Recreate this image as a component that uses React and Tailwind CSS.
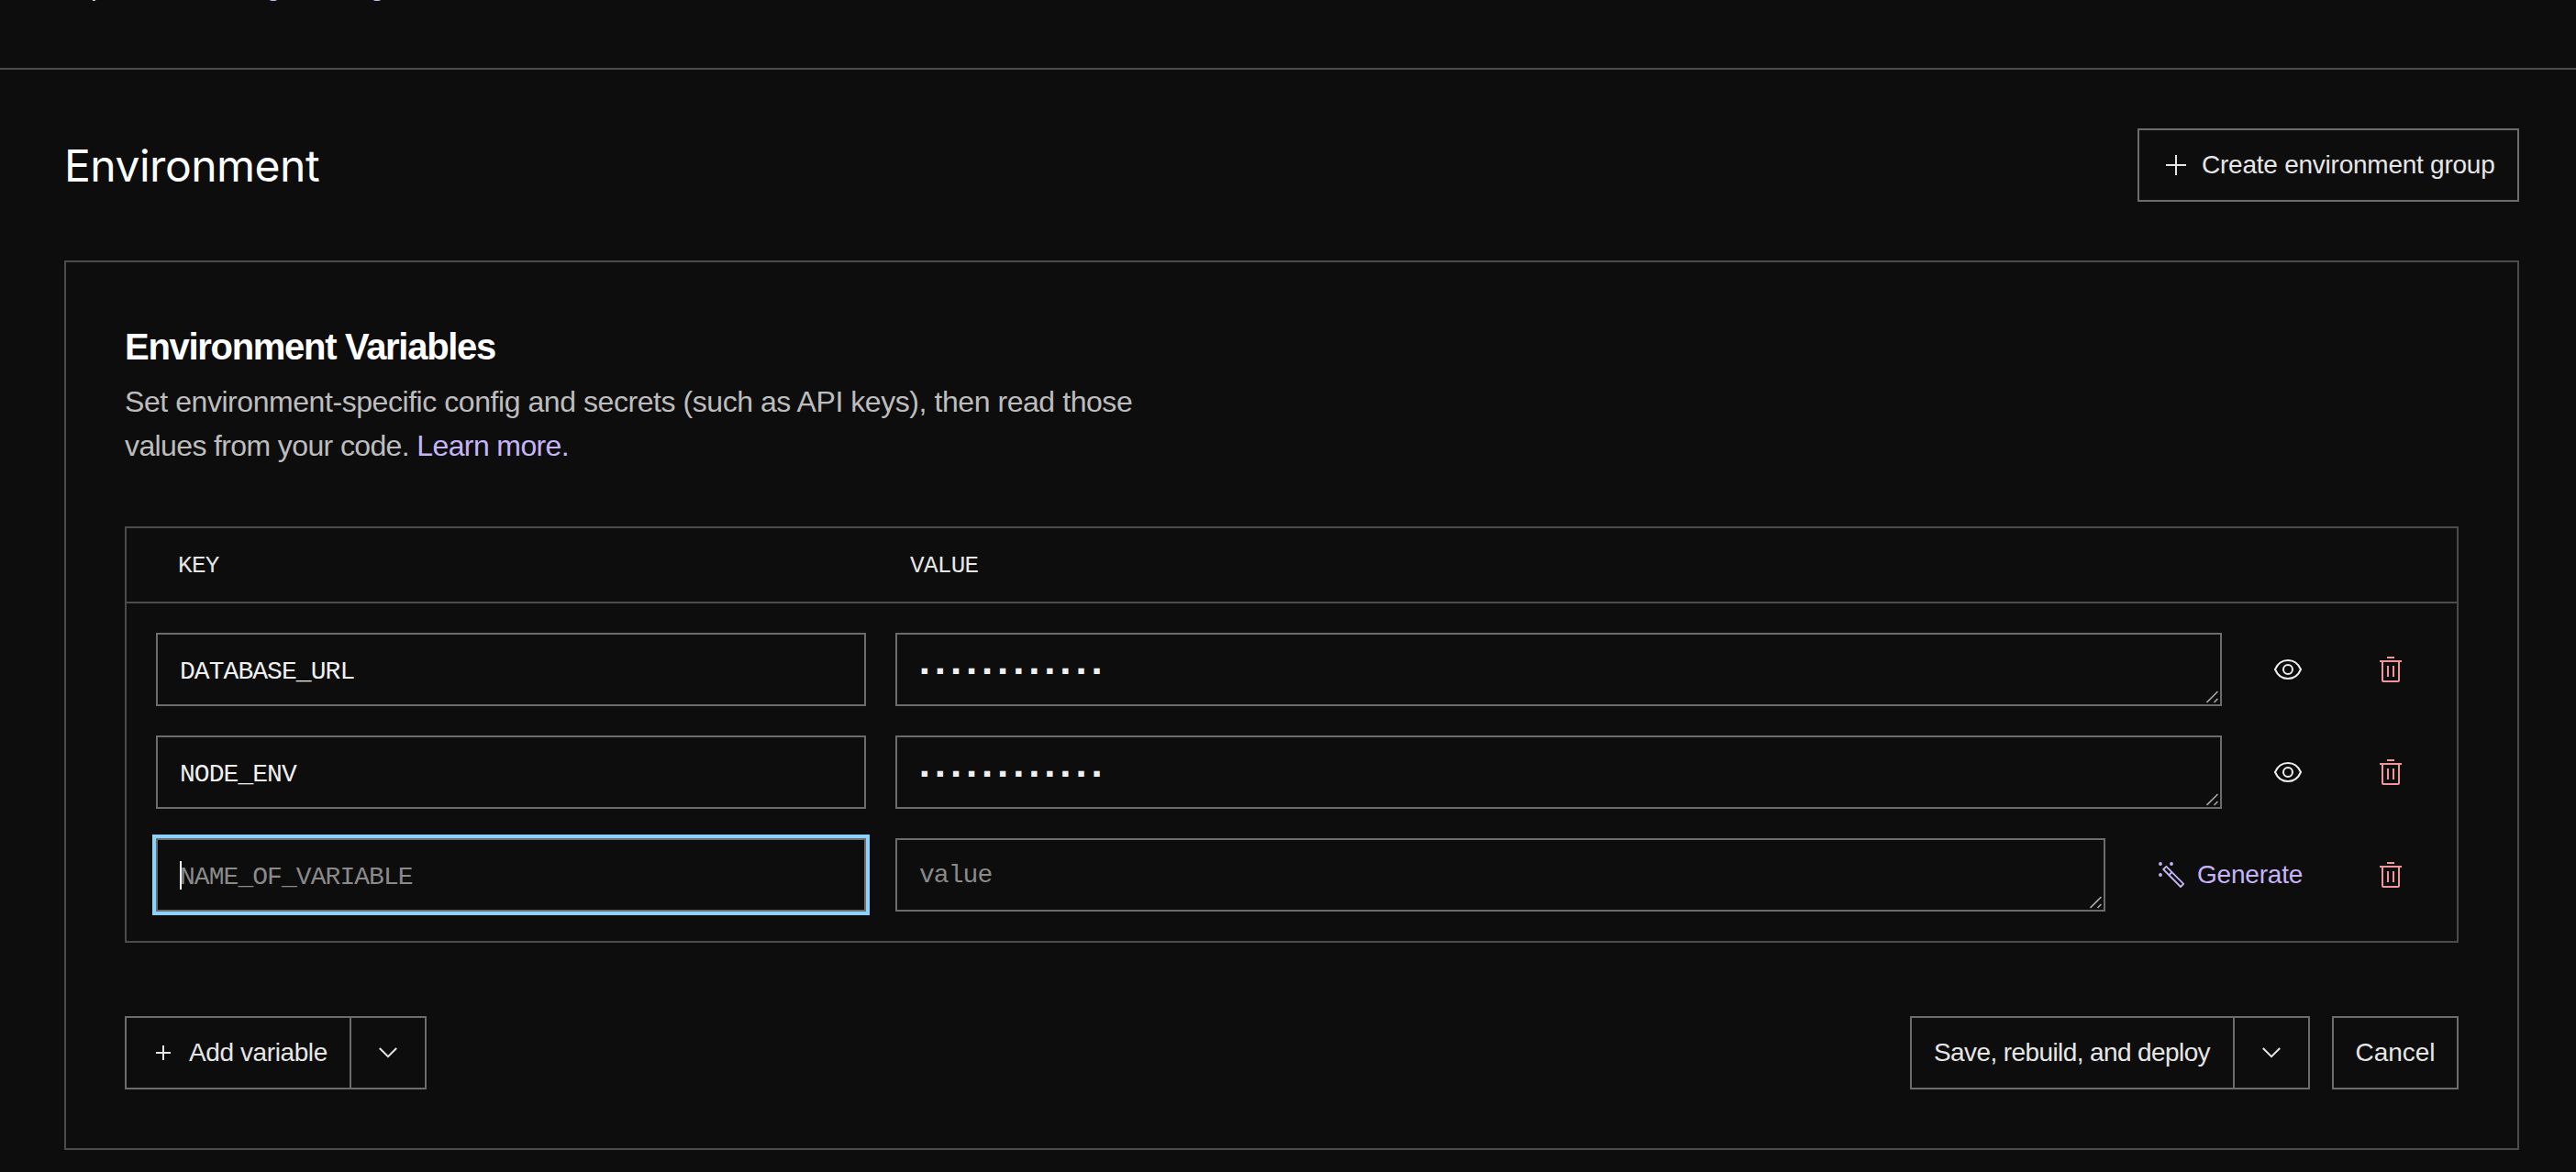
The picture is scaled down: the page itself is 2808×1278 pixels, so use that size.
import React, { useState } from 'react';

const initialVariables = [
  { id: 1, key: 'DATABASE_URL', saved: true },
  { id: 2, key: 'NODE_ENV', saved: true },
  { id: 3, key: '', saved: false },
];

function PlusIcon({ className }) {
  return (
    <svg viewBox="0 0 22 22" className={className} fill="none" stroke="currentColor">
      <path d="M11 0V22M0 11H22" strokeWidth="2" vectorEffect="non-scaling-stroke" />
    </svg>
  );
}

function ChevronIcon() {
  return (
    <svg viewBox="0 0 20 12" className="w-5 h-3" fill="none" stroke="currentColor" strokeWidth="2">
      <path d="M0.8 1L10 10.2L19.2 1" />
    </svg>
  );
}

function EyeIcon() {
  return (
    <svg viewBox="0 0 32 24" className="w-8 h-6" fill="none" stroke="currentColor" strokeWidth="2">
      <path d="M2 12C4.8 5.5 10 2 16 2S27.2 5.5 30 12C27.2 18.5 22 22 16 22S4.8 18.5 2 12Z" />
      <circle cx="16" cy="12" r="5" />
    </svg>
  );
}

function TrashIcon() {
  return (
    <svg viewBox="0 0 24 28" className="w-6 h-7" fill="none" stroke="currentColor" strokeWidth="2">
      <path d="M8 1H16M0 5H24M9 10V22M15 10V22" />
      <path d="M3 5V26Q3 27 4 27H20Q21 27 21 26V5" />
    </svg>
  );
}

function WandIcon() {
  return (
    <svg viewBox="0 0 28 28" className="w-7 h-7" fill="none" stroke="currentColor" strokeWidth="1.8">
      <path d="M5.2 8L8.4 4.8L27.2 23.8L24 27Z" strokeLinejoin="round" />
      <path d="M11.2 14.4L14.6 11" />
      <g fill="currentColor" stroke="none">
        <circle cx="2" cy="2" r="1.9" />
        <circle cx="14" cy="2" r="1.9" />
        <circle cx="2" cy="14" r="1.9" />
      </g>
    </svg>
  );
}

function ResizeHandle() {
  return (
    <svg
      viewBox="0 0 14 14"
      className="absolute right-[1px] bottom-[1px] w-3.5 h-3.5 text-[#a8a8a8]"
      fill="none"
      stroke="currentColor"
      strokeWidth="1.6"
    >
      <path d="M0.5 13L12.5 1M8.5 13L12.5 9" />
    </svg>
  );
}

function VariableRow({ variable, onChange, onDelete }) {
  return (
    <div className="flex gap-8">
      <div className={variable.saved ? 'relative' : 'relative ring-4 ring-[#8bd2fc]'}>
        <input
          value={variable.key}
          onChange={(e) => onChange(variable.id, e.target.value)}
          placeholder="NAME_OF_VARIABLE"
          className="block w-[774px] h-20 px-6 pt-[5px] border-2 border-[#6c6c6c] bg-transparent font-['Liberation_Mono',monospace] text-[28px] tracking-[-0.95px] text-[#f0f0f0] placeholder:text-[#8a8a8a] outline-none"
        />
        {!variable.saved && <span className="absolute left-[26px] top-[25px] w-0.5 h-[31px] bg-white"></span>}
      </div>

      <div className="relative flex-1 h-20 px-6 flex items-center border-2 border-[#6c6c6c]">
        {variable.saved ? (
          <span className="pl-px pt-px font-['DejaVu_Sans_Mono',monospace] text-[16px] leading-8 tracking-[7.43px] text-[#f0f0f0]">
            ▪▪▪▪▪▪▪▪▪▪▪▪
          </span>
        ) : (
          <span className="pt-px font-['Liberation_Mono',monospace] text-[28px] leading-8 tracking-[-0.95px] text-[#8a8a8a]">
            value
          </span>
        )}
        <ResizeHandle />
      </div>

      {variable.saved ? (
        <button className="w-20 h-20 flex items-center justify-center text-[#f0f0f0]">
          <EyeIcon />
        </button>
      ) : (
        <button className="w-[207px] h-20 pl-[26px] flex items-center gap-3.5 text-[28px] tracking-[-0.2px] text-[#c6b4f7]">
          <WandIcon />
          Generate
        </button>
      )}
      <button
        onClick={() => onDelete(variable.id)}
        className="w-20 h-20 flex items-center justify-center text-[#ef979c]"
      >
        <TrashIcon />
      </button>
    </div>
  );
}

function App() {
  const [variables, setVariables] = useState(initialVariables);

  const handleChange = (id, key) => {
    setVariables(variables.map((v) => (v.id === id ? { ...v, key } : v)));
  };

  const handleDelete = (id) => {
    setVariables(variables.filter((v) => v.id !== id));
  };

  return (
    <div className="h-[1278px] overflow-hidden bg-[#0d0d0d] text-[#e6e6e6] font-['Liberation_Sans',sans-serif] text-[28px]">
      {/* bottom edge of the scrolled-away header */}
      <header className="h-[76px] pl-[71px] overflow-hidden border-b-2 border-[#4c4c4c]">
        <div className="-mt-[34px] flex leading-10 whitespace-nowrap">
          <span className="w-[162px] tracking-tight">Top</span>
          <a className="text-[#c6b4f7] tracking-[-0.4px]">config branding</a>
        </div>
      </header>

      <main className="pl-[70px] pr-[62px] pt-16">
        <div className="flex items-center justify-between h-20">
          <h1 className="pt-0.5 font-['Inter',sans-serif] text-[48px] leading-[58px] tracking-[-0.5px] text-white">
            Environment
          </h1>
          <button className="w-[416px] h-20 pl-[29px] flex items-center gap-[17px] border-2 border-[#6c6c6c] tracking-[-0.24px] whitespace-nowrap">
            <PlusIcon className="w-[22px] h-[22px]" />
            Create environment group
          </button>
        </div>

        <section className="mt-16 p-16 border-2 border-[#4c4c4c]">
          <h2 className="text-[40px] leading-[56px] font-bold tracking-[-1.3px] text-white">
            Environment Variables
          </h2>
          <p className="mt-2 text-[32px] leading-[48px] tracking-[-0.44px] text-[#bdbdbd]">
            Set environment-specific config and secrets (such as API keys), then read those
            <br />
            <span className="tracking-[-0.62px]">
              values from your code. <a className="text-[#c6b4f7]">Learn more.</a>
            </span>
          </p>

          <div className="mt-16 border-2 border-[#4c4c4c]">
            <div className="flex items-center h-[82px] pl-14 pt-0.5 border-b-2 border-[#4c4c4c] font-['Liberation_Mono',monospace] text-[26px] tracking-[-0.7px]">
              <span className="w-[798px]">KEY</span>
              <span>VALUE</span>
            </div>
            <div className="p-8 flex flex-col gap-8">
              {variables.map((v) => (
                <VariableRow key={v.id} variable={v} onChange={handleChange} onDelete={handleDelete} />
              ))}
            </div>
          </div>

          <div className="mt-20 flex items-center justify-between whitespace-nowrap">
            <div className="flex h-20 border-2 border-[#6c6c6c]">
              <button className="w-[245px] pl-8 flex items-center gap-5 border-r-2 border-[#6c6c6c] tracking-[-0.4px]">
                <PlusIcon className="w-4 h-4" />
                Add variable
              </button>
              <button className="w-20 flex items-center justify-center">
                <ChevronIcon />
              </button>
            </div>

            <div className="flex gap-6">
              <div className="flex h-20 border-2 border-[#6c6c6c]">
                <button className="w-[352px] pl-6 flex items-center border-r-2 border-[#6c6c6c] tracking-[-0.6px]">
                  Save, rebuild, and deploy
                </button>
                <button className="w-20 flex items-center justify-center">
                  <ChevronIcon />
                </button>
              </div>
              <button className="w-[138px] h-20 border-2 border-[#6c6c6c]">Cancel</button>
            </div>
          </div>
        </section>
      </main>
    </div>
  );
}

export default App;
